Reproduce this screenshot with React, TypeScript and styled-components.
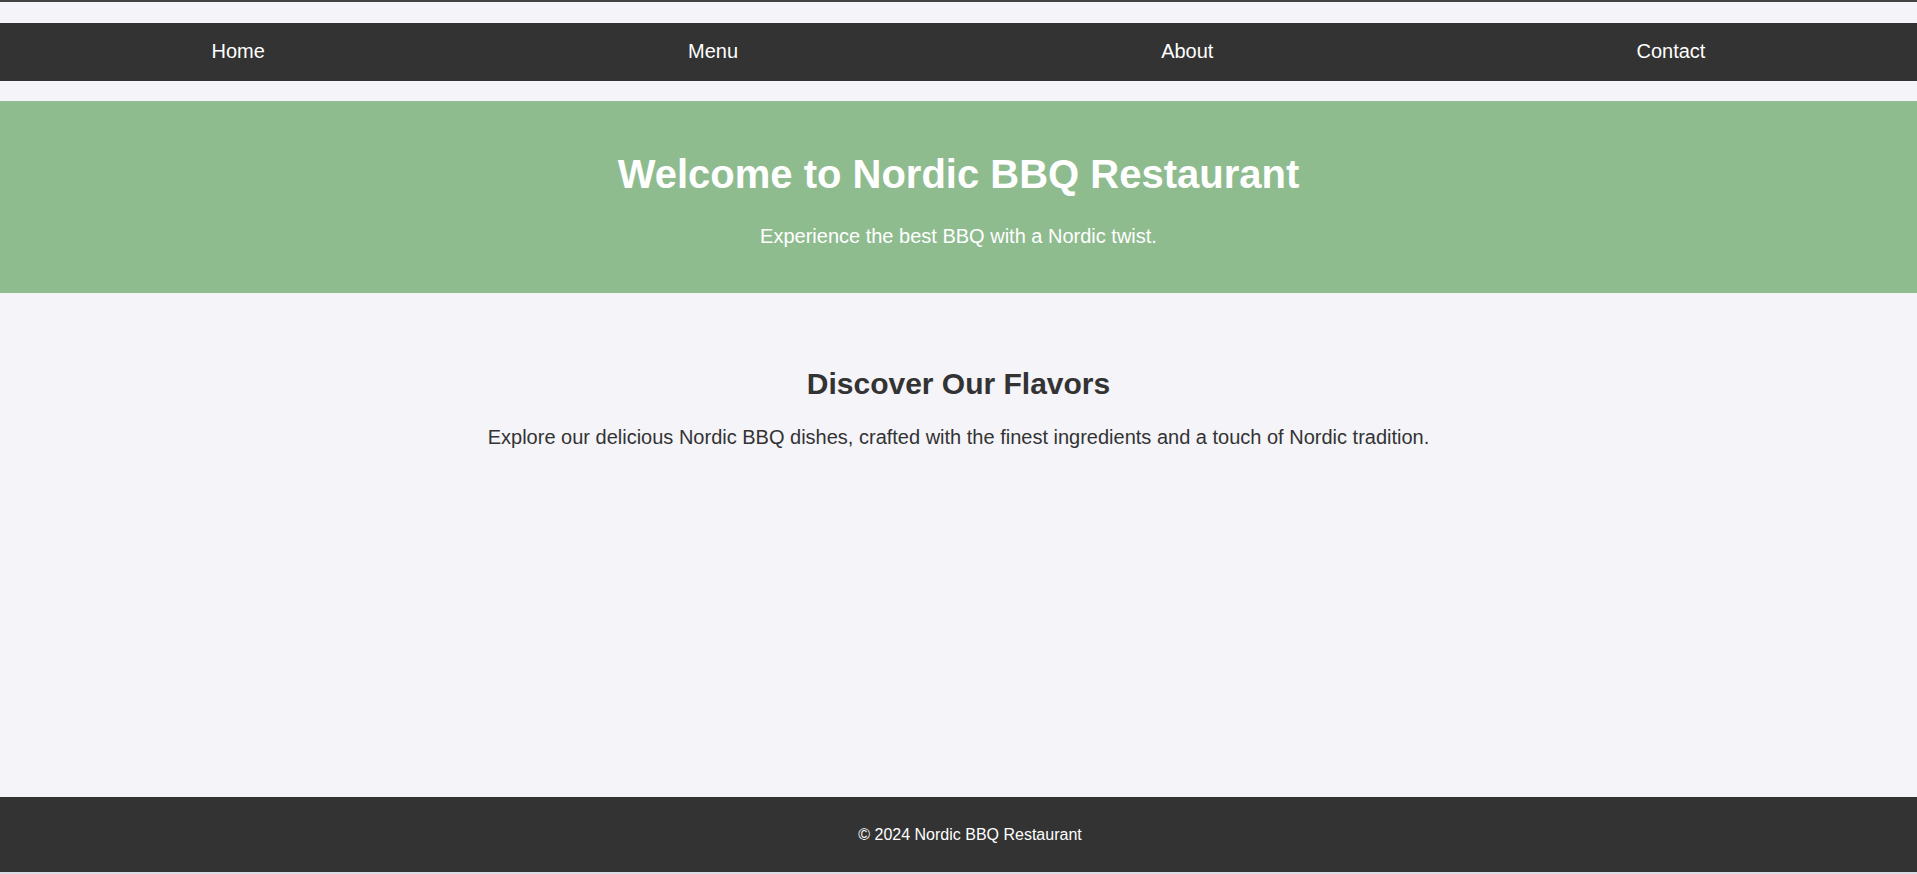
import React from "react";
import styled, { createGlobalStyle } from "styled-components";

const GlobalStyle = createGlobalStyle`
  * { box-sizing: border-box; }
  html, body { margin: 0; padding: 0; }
  body {
    background: #f4f4f9;
    font-family: "Liberation Sans", Arial, sans-serif;
    color: #333;
  }
`;

const Page = styled.div`
  min-height: 874px;
  display: flex;
  flex-direction: column;
  background: #f4f4f9;
`;

const TopRule = styled.div`
  height: 2px;
  background: #444;
  margin-bottom: 21px;
`;

const Nav = styled.nav`
  height: 58px;
  background: #333;
  display: flex;
  align-items: center;
  justify-content: space-around;
  margin-bottom: 20px;
`;

const NavLink = styled.a`
  color: #fff;
  text-decoration: none;
  font-size: 20px;
  line-height: 23px;
  margin-top: -1px;
`;

const Hero = styled.header`
  background: #8fbc8f;
  color: #fff;
  text-align: center;
  padding: 50px 20px 45px;
`;

const HeroTitle = styled.h1`
  margin: 0 0 28px;
  font-size: 40px;
  line-height: 46px;
  font-weight: 700;
`;

const HeroText = styled.p`
  margin: 0;
  font-size: 20px;
  line-height: 23px;
`;

const Main = styled.main`
  flex: 1;
  text-align: center;
  padding: 74px 20px 0;
`;

const SectionTitle = styled.h2`
  margin: 0 0 25px;
  font-size: 30px;
  line-height: 34px;
  font-weight: 700;
  color: #333;
`;

const SectionText = styled.p`
  margin: 0;
  font-size: 20px;
  line-height: 23px;
  color: #333;
`;

const Footer = styled.footer`
  height: 75px;
  background: #333;
  color: #fff;
  text-align: center;
  font-size: 16px;
  line-height: 18px;
  padding: 29px 0 0 23px;
`;

const BottomRule = styled.div`
  height: 2px;
  background: #dadde6;
`;

const links = ["Home", "Menu", "About", "Contact"];

export default function App() {
  return (
    <>
      <GlobalStyle />
      <Page>
        <TopRule />
        <Nav>
          {links.map((l) => (
            <NavLink key={l} href="#">
              {l}
            </NavLink>
          ))}
        </Nav>
        <Hero>
          <HeroTitle>Welcome to Nordic BBQ Restaurant</HeroTitle>
          <HeroText>Experience the best BBQ with a Nordic twist.</HeroText>
        </Hero>
        <Main>
          <SectionTitle>Discover Our Flavors</SectionTitle>
          <SectionText>
            Explore our delicious Nordic BBQ dishes, crafted with the finest
            ingredients and a touch of Nordic tradition.
          </SectionText>
        </Main>
        <Footer>© 2024 Nordic BBQ Restaurant</Footer>
        <BottomRule />
      </Page>
    </>
  );
}
